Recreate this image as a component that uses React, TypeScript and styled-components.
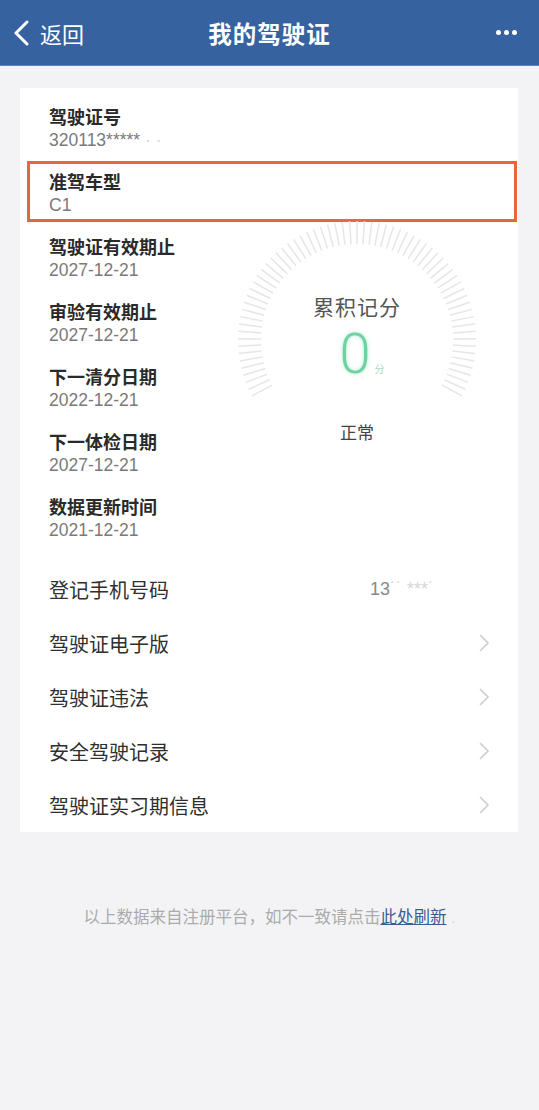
import styled, { createGlobalStyle } from 'styled-components';

const GlobalStyle = createGlobalStyle`
  html, body {
    margin: 0;
    padding: 0;
    background: #f3f3f5;
    font-family: "Liberation Sans", "Noto Sans CJK SC", sans-serif;
  }
`;

const Page = styled.div`
  width: 539px;
  min-height: 1110px;
  background: #f3f3f5;
`;

const Header = styled.div`
  height: 65px;
  background: #3762a0;
  border-bottom: 1px solid #6282b8;
  display: grid;
  grid-template-columns: 120px 1fr 120px;
  align-items: center;
  color: #fff;
`;

const Back = styled.div`
  display: flex;
  align-items: center;
  gap: 10px;
  padding-left: 12px;
  font-size: 22px;
`;

const Title = styled.div`
  text-align: center;
  font-size: 23.5px;
  font-weight: 700;
  letter-spacing: 1px;
`;

const More = styled.div`
  display: flex;
  justify-content: flex-end;
  gap: 3px;
  padding-right: 22px;
`;

const Dot = styled.span`
  width: 5px;
  height: 5px;
  border-radius: 50%;
  background: #fff;
`;

const Card = styled.div`
  margin: 22px 21px 0 20px;
  background: #fff;
  padding-top: 8px;
`;

const Item = styled.div<{ $boxed?: boolean }>`
  height: 65px;
  box-sizing: border-box;
  padding: ${(p) => (p.$boxed ? '8px 0 0 19px' : '11px 0 0 29px')};
  ${(p) =>
    p.$boxed &&
    `
    border: 3px solid #e5673d;
    margin: 0 1px 4px 7px;
    height: 61px;
  `}
`;

const Label = styled.div`
  font-size: 18px;
  line-height: 22px;
  font-weight: 700;
  color: #2a2a2a;
  white-space: nowrap;
`;

const Value = styled.div`
  font-size: 17.5px;
  line-height: 22px;
  color: #7a7a7a;
  white-space: nowrap;
`;

const Faint = styled.span`
  color: #d6d6d6;
`;

const DetailRow = styled.div`
  display: flex;
`;

const DetailCol = styled.div`
  flex: 1;
`;

const Gauge = styled.div`
  position: relative;
  width: 250px;
  height: 250px;
  margin: -14px 36px 0 0;
  display: flex;
  flex-direction: column;
  align-items: center;
  padding-top: 82px;
  box-sizing: border-box;
`;

const Ticks = styled.svg`
  position: absolute;
  left: 0;
  top: 0;
`;

const GaugeTitle = styled.div`
  font-size: 21px;
  line-height: 28px;
  color: #555;
  letter-spacing: 1px;
`;

const Score = styled.div`
  display: flex;
  align-items: flex-end;
  height: 56px;
  margin-top: 4px;
`;

const ScoreNum = styled.span`
  font-family: Roboto, "Liberation Sans", sans-serif;
  font-weight: 300;
  font-size: 56px;
  line-height: 56px;
  color: #6fd2a2;
  text-shadow: 0 0 4px rgba(111, 210, 162, 0.5);
  margin-left: 10px;
`;

const ScoreUnit = styled.span`
  font-size: 10px;
  color: #a7dcc2;
  margin: 0 0 6px 4px;
`;

const Status = styled.div`
  margin-top: 40px;
  font-size: 17px;
  line-height: 24px;
  color: #444;
`;

const MenuList = styled.div`
  margin-top: 11px;
`;

const MenuRow = styled.div`
  height: 54px;
  display: flex;
  align-items: center;
  padding: 0 28px 0 29px;
`;

const MenuLabel = styled.div`
  flex: 1;
  font-size: 20px;
  color: #2f2f2f;
`;

const Phone = styled.div`
  font-size: 18px;
  color: #888;
  margin-right: 20px;
  width: 100px;
`;

const Footer = styled.div`
  margin-top: 72px;
  text-align: center;
  font-size: 16.5px;
  color: #ababab;
`;

const Link = styled.span`
  color: #3a5c90;
  text-decoration: underline;
`;

const Chevron = () => (
  <svg width="12" height="20" viewBox="0 0 12 20">
    <path d="M2 2 L10 10 L2 18" fill="none" stroke="#cdcdcd" strokeWidth="1.6" />
  </svg>
);

const GaugeTicks = () => {
  const cx = 125;
  const cy = 128;
  const lines = [];
  const count = 66;
  for (let i = 0; i <= count; i++) {
    const a = ((208 - (236 * i) / count) * Math.PI) / 180;
    const r1 = 96;
    const r2 = 119;
    lines.push(
      <line
        key={i}
        x1={cx + r1 * Math.cos(a)}
        y1={cy - r1 * Math.sin(a)}
        x2={cx + r2 * Math.cos(a)}
        y2={cy - r2 * Math.sin(a)}
        stroke="#e6e6e6"
        strokeWidth="1.5"
      />
    );
  }
  return (
    <Ticks width="250" height="250" viewBox="0 0 250 250">
      {lines}
    </Ticks>
  );
};

const details = [
  { label: '驾驶证有效期止', value: '2027-12-21' },
  { label: '审验有效期止', value: '2027-12-21' },
  { label: '下一清分日期', value: '2022-12-21' },
  { label: '下一体检日期', value: '2027-12-21' },
  { label: '数据更新时间', value: '2021-12-21' },
];

const menus = ['驾驶证电子版', '驾驶证违法', '安全驾驶记录', '驾驶证实习期信息'];

export default function App() {
  return (
    <Page>
      <GlobalStyle />
      <Header>
        <Back>
          <svg width="18" height="26" viewBox="0 0 18 26">
            <path d="M15 2 L4 13 L15 24" fill="none" stroke="#fff" strokeWidth="3" strokeLinecap="round" strokeLinejoin="round" />
          </svg>
          <span>返回</span>
        </Back>
        <Title>我的驾驶证</Title>
        <More>
          <Dot />
          <Dot />
          <Dot />
        </More>
      </Header>

      <Card>
        <Item>
          <Label>驾驶证号</Label>
          <Value>
            320113*****<Faint> ·  ·</Faint>
          </Value>
        </Item>
        <Item $boxed>
          <Label>准驾车型</Label>
          <Value>C1</Value>
        </Item>
        <DetailRow>
          <DetailCol>
            {details.map((d) => (
              <Item key={d.label}>
                <Label>{d.label}</Label>
                <Value>{d.value}</Value>
              </Item>
            ))}
          </DetailCol>
          <Gauge>
            <GaugeTicks />
            <GaugeTitle>累积记分</GaugeTitle>
            <Score>
              <ScoreNum>0</ScoreNum>
              <ScoreUnit>分</ScoreUnit>
            </Score>
            <Status>正常</Status>
          </Gauge>
        </DetailRow>

        <MenuList>
          <MenuRow>
            <MenuLabel>登记手机号码</MenuLabel>
            <Phone>
              13<Faint>˙˙ ***˙</Faint>
            </Phone>
          </MenuRow>
          {menus.map((m) => (
            <MenuRow key={m}>
              <MenuLabel>{m}</MenuLabel>
              <Chevron />
            </MenuRow>
          ))}
        </MenuList>
      </Card>

      <Footer>
        以上数据来自注册平台，如不一致请点击<Link>此处刷新</Link>
        <Faint> .</Faint>
      </Footer>
    </Page>
  );
}
